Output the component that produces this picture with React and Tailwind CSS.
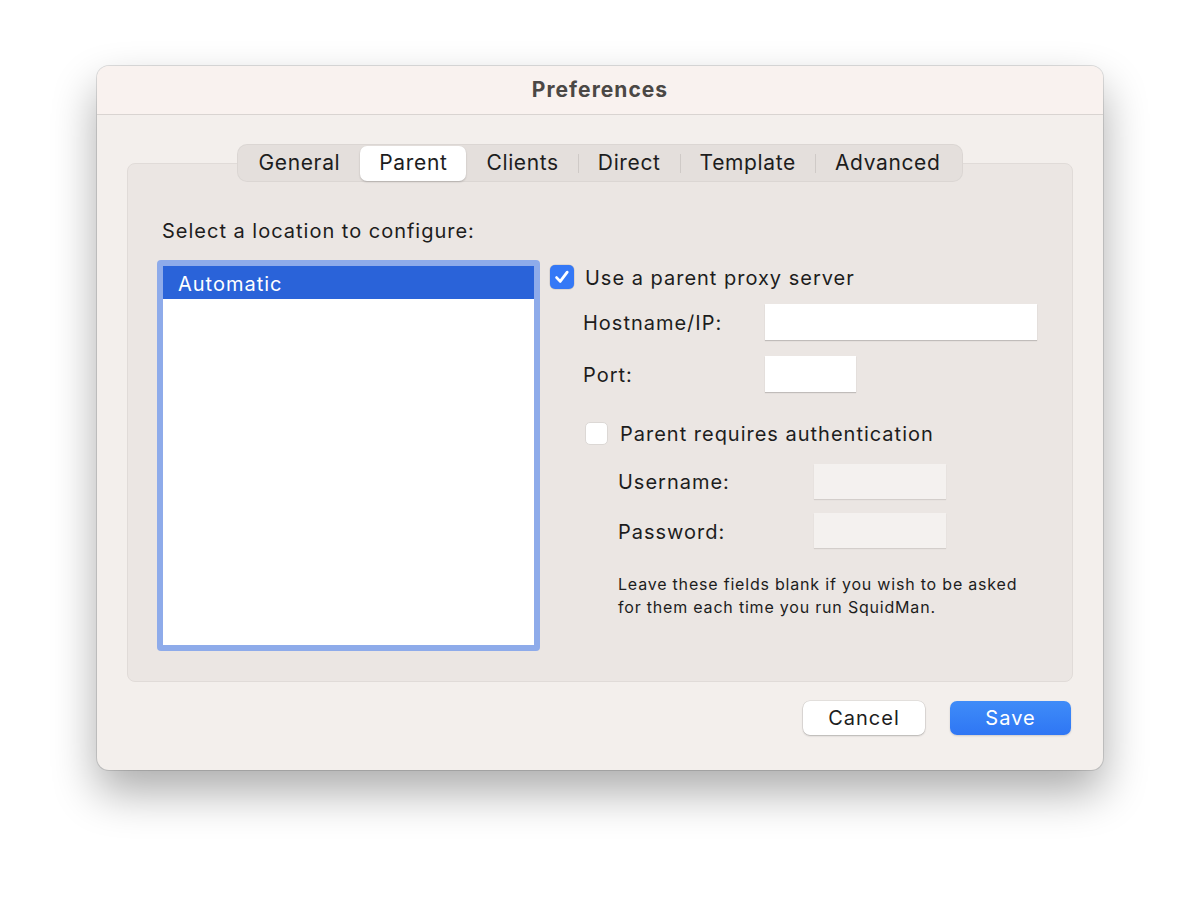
export default function App() {
  const tabs = ['General', 'Parent', 'Clients', 'Direct', 'Template', 'Advanced'];
  const selected = 'Parent';

  return (
    <div className="min-h-[899px] w-[1200px] bg-white pl-[97px] pt-[66px] font-['Inter',_'Liberation_Sans',_sans-serif] tracking-[0.062em] text-[#1d1d1d]">
      <div className="flex h-[704px] w-[1006px] flex-col overflow-hidden rounded-[12px] bg-[#f3efec] shadow-[0_0_0_1px_rgba(0,0,0,0.12),0_22px_45px_rgba(0,0,0,0.33)]">
        {/* title bar */}
        <div className="flex h-[49px] items-center justify-center border-b border-[#d9d4d1] bg-[#f9f2ef]">
          <span className="text-[21px] font-bold tracking-[0.05em] text-[#4b4845]">Preferences</span>
        </div>

        <div className="flex flex-1 flex-col px-[30px] pt-[29px]">
          {/* tabs */}
          <div className="relative z-10 mb-[-19px] flex justify-center">
            <div className="flex h-[38px] items-center rounded-[10px] bg-[#e4dfdc] px-[2px] tracking-[0.04em] shadow-[inset_0_0_0_1px_rgba(0,0,0,0.04)]">
              {tabs.map((t, i) => {
                const on = t === selected;
                const nextOn = tabs[i + 1] === selected;
                const showSep = i < tabs.length - 1 && !on && !nextOn;
                return (
                  <div key={t} className="flex items-center">
                    <div
                      className={
                        on
                          ? 'flex h-[35px] items-center rounded-[7px] bg-white px-[19px] text-[21px] shadow-[0_1px_2px_rgba(0,0,0,0.2)]'
                          : 'flex h-[35px] items-center px-[19px] text-[21px]'
                      }
                    >
                      {t}
                    </div>
                    <div className={showSep ? 'h-[19px] w-px bg-[#cfcac7]' : 'h-[19px] w-px'} />
                  </div>
                );
              })}
            </div>
          </div>

          {/* tab panel */}
          <div className="h-[519px] rounded-[8px] border border-[#e0dbd8] bg-[#ebe6e3] px-[29px] pt-[55px]">
            <div className="ml-[5px] h-[24px] text-[20px] leading-[24px]">Select a location to configure:</div>
            <div className="mt-[17px] flex">
              {/* location list */}
              <div className="h-[391px] w-[383px] rounded-[4px] bg-[#8eabea] p-[6px]">
                <div className="h-full bg-white">
                  <div className="flex h-[33px] items-center bg-[#2a63d9] pl-[15px] pt-[2px] text-[20px] text-white">Automatic</div>
                </div>
              </div>

              {/* settings */}
              <div className="ml-[10px] flex flex-col">
                <div className="mt-[5px] flex h-[24px] items-center">
                  <div className="flex h-[24px] w-[24px] items-center justify-center rounded-[5px] bg-[#3478f6] shadow-[0_0_0_0.5px_rgba(0,0,0,0.15)]">
                    <svg width="18" height="18" viewBox="0 0 18 18" fill="none">
                      <path d="M3.6 9.6 L7.2 13.4 L14.2 4.2" stroke="white" strokeWidth="2.8" strokeLinecap="round" strokeLinejoin="round" />
                    </svg>
                  </div>
                  <span className="ml-[11px] pt-[1px] text-[20px]">Use a parent proxy server</span>
                </div>

                <div className="mt-[15px] flex items-center pl-[33px]">
                  <span className="w-[182px] pt-[1px] text-[20px]">Hostname/IP:</span>
                  <div className="h-[36px] w-[272px] bg-white shadow-[0_1px_1px_rgba(0,0,0,0.18)]" />
                </div>

                <div className="mt-[16px] flex items-center pl-[33px]">
                  <span className="w-[182px] pt-[2px] text-[20px]">Port:</span>
                  <div className="h-[36px] w-[91px] bg-white shadow-[0_1px_1px_rgba(0,0,0,0.18)]" />
                </div>

                <div className="mt-[30px] flex h-[23px] items-center pl-[35px]">
                  <div className="h-[23px] w-[23px] rounded-[5px] border border-[#dcd8d5] bg-white" />
                  <span className="ml-[12px] pt-[1px] text-[20px]">Parent requires authentication</span>
                </div>

                <div className="mt-[19px] flex items-center pl-[68px]">
                  <span className="w-[196px] text-[20px]">Username:</span>
                  <div className="h-[35px] w-[132px] bg-[#f4f1ef] shadow-[0_1px_1px_rgba(0,0,0,0.1)]" />
                </div>

                <div className="mt-[14px] flex items-center pl-[68px]">
                  <span className="w-[196px] pt-[2px] text-[20px]">Password:</span>
                  <div className="h-[35px] w-[132px] bg-[#f4f1ef] shadow-[0_1px_1px_rgba(0,0,0,0.1)]" />
                </div>

                <p className="mt-[25px] pl-[68px] text-[16px] leading-[23px] tracking-[0.05em]">
                  Leave these fields blank if you wish to be asked
                  <br />
                  for them each time you run SquidMan.
                </p>
              </div>
            </div>
          </div>

          {/* buttons */}
          <div className="mt-[19px] flex justify-end gap-[25px] pr-[2px]">
            <button className="h-[34px] w-[122px] rounded-[7px] bg-white text-[20px] tracking-[0.05em] shadow-[0_0_0_0.5px_rgba(0,0,0,0.12),0_1px_2px_rgba(0,0,0,0.2)]">
              Cancel
            </button>
            <button className="h-[34px] w-[121px] rounded-[7px] bg-gradient-to-b from-[#3f8cf8] to-[#2f76f4] text-[20px] tracking-[0.05em] text-white shadow-[0_1px_2px_rgba(0,0,0,0.15)]">
              Save
            </button>
          </div>
        </div>
      </div>
    </div>
  );
}
